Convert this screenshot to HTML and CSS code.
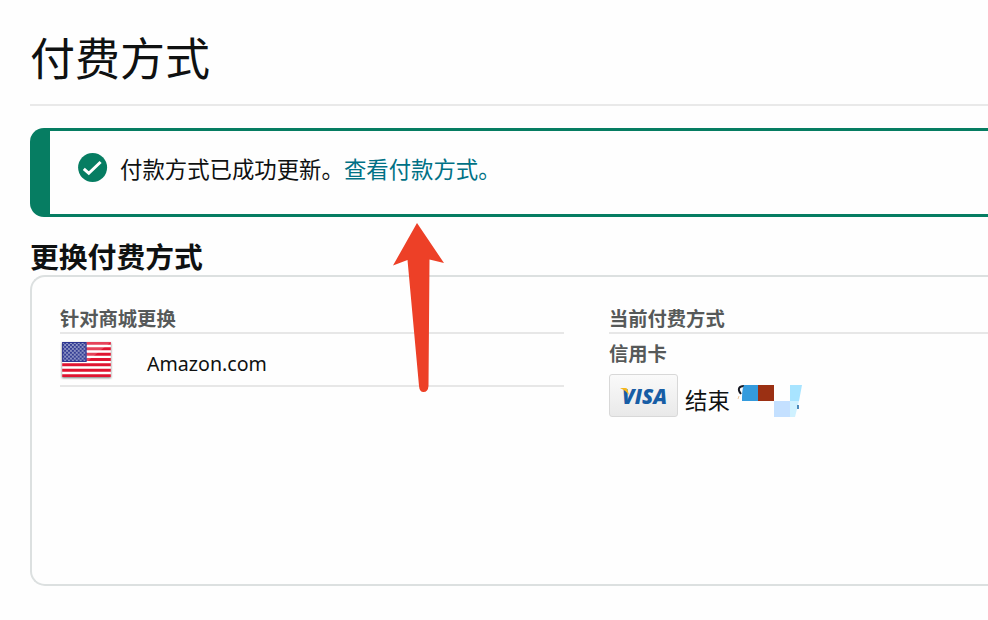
FILE: index.html
```html
<!DOCTYPE html>
<html lang="zh-CN">
<head>
<meta charset="utf-8">
<title>付费方式</title>
<link rel="stylesheet" href="styles.css">
</head>
<body>
<main class="page">
  <h1 class="title">付费方式</h1>
  <div class="alert">
    <svg class="check" viewBox="0 0 30 30"><circle cx="14.600" cy="14.600" r="14.5" fill="#067d62"/><path d="M5.800 15.800l5 4.500L22.600 9" fill="none" stroke="#fff" stroke-width="3"/></svg>
    <p class="message">付款方式已成功更新。<a class="link">查看付款方式。</a></p>
  </div>
  <h2 class="heading">更换付费方式</h2>
  <section class="card">
    <div class="column">
      <h3 class="label">针对商城更换</h3>
      <div class="store">
        <svg class="flag" viewBox="0 0 50 36">
          <defs>
            <pattern id="stars" width="4" height="4" patternUnits="userSpaceOnUse"><rect width="4" height="4" fill="#343e94"/><circle cx="1" cy="1" r=".85" fill="#e5e8f5"/><circle cx="3" cy="3" r=".85" fill="#e5e8f5"/></pattern>
          </defs>
          <rect width="50" height="36" fill="#fff"/>
          <path d="M0 1.4h50M0 6.95h50M0 12.5h50M0 18h50M0 23.5h50M0 29h50M0 34.6h50" stroke="#e01431" stroke-width="3.1"/>
          <path d="M0 0h50L25 20.500H0z" fill="#fff" fill-opacity=".2"/>
          <rect width="25" height="20.5" fill="url(#stars)"/>
          <rect x=".5" y=".5" width="24" height="19.500" fill="none" stroke="#2b3490"/>
        </svg>
        <span class="store-name">Amazon.com</span>
      </div>
    </div>
    <div class="column column-method">
      <h3 class="label">当前付费方式</h3>
      <h3 class="type">信用卡</h3>
      <div class="method">
        <span class="visa"><svg width="60" height="34" viewBox="0 0 60 34"><text class="visa-text" x="8" y="25" textLength="45" lengthAdjust="spacingAndGlyphs">VISA</text><path d="M6 9h5.500q1.800 0 2.200 2l1.200 5Q12 11.500 6 9z" fill="#f4b61d"/></svg></span>
        <span class="ending">结束</span>
        <svg class="mask" viewBox="0 0 68 36">
          <path d="M5 13C1 8 3 5 8 5" fill="none" stroke="#171923" stroke-width="2"/>
          <path d="M3 15l-1 3" stroke="#efc79b"/>
          <path d="M8 4h14v16H6c0-6 0-12 2-16z" fill="#349bdd"/>
          <path d="M22 4h16v16H22z" fill="#9b3013"/>
          <path d="M38 20h16v16H38z" fill="#c4e0ff"/>
          <path d="M54 4h12l-3 16h-9z" fill="#a8e4ff"/>
          <path d="M54 20h9l-4 16h-5z" fill="#cff1ff"/>
          <path d="M62 24v4" stroke="#1664a5" stroke-width="1.5"/>
        </svg>
      </div>
    </div>
  </section>
  <svg class="arrow" viewBox="0 0 52 170"><path d="M24 0L51 40L36.5 36.5L35.5 163Q35 169 30.500 169Q26.500 169 26 163L14.500 37L0 42.500z" fill="#ed4027"/></svg>
</main>
</body>
</html>
```
FILE: styles.css
```css
* { box-sizing: border-box; }
body {
  margin: 0;
  overflow: hidden;
  background: #fefefe;
  color: #0f1111;
  font-family: "Noto Sans", "Noto Sans CJK SC", sans-serif;
}
.page {
  position: relative;
  height: 620px;
  padding: 12px 0 0 30px;
}
h1, h2, h3, p { margin: 0; }
.title {
  height: 94px;
  border-bottom: 2px solid #e9e9e9;
  font-size: 45px;
  font-weight: 400;
  line-height: 93px;
}
.alert {
  display: flex;
  height: 89px;
  margin-top: 22px;
  padding: 22px 0 0 28px;
  border: 3px solid #067d62;
  border-left-width: 20px;
  border-right: 0;
  border-radius: 14px 0 0 14px;
}
.check { flex: none; width: 30px; height: 30px; }
.message {
  margin-left: 12px;
  font-size: 22.4px;
  line-height: 34px;
  white-space: nowrap;
}
.link { color: #007185; }
.heading {
  height: 58px;
  padding-top: 19px;
  font-size: 28.8px;
  font-weight: 700;
  line-height: 42px;
}
.card {
  display: grid;
  grid-template-columns: 504px 1fr;
  column-gap: 45px;
  height: 311px;
  padding: 28px 0 0 28px;
  border: 2px solid #dce0e0;
  border-right: 0;
  border-radius: 15px 0 0 15px;
}
.label {
  height: 29px;
  border-bottom: 2px solid #e7e7e7;
}
.label, .type {
  color: #565959;
  font-size: 19.3px;
  font-weight: 700;
  line-height: 28px;
}
.type { height: 40px; line-height: 40px; }
.store {
  display: flex;
  height: 53px;
  padding: 8px 0 0 2px;
  border-bottom: 2px solid #e7e7e7;
}
.flag {
  width: 49px;
  height: 35px;
  filter: drop-shadow(0 1px 1px #777);
}
.store-name {
  margin-left: 36px;
  font-size: 19.6px;
  line-height: 44px;
}
.method { display: flex; }
.visa {
  display: grid;
  place-items: center;
  width: 69px;
  height: 43px;
  border: 1.5px solid #d8d8d8;
  border-radius: 3px;
  background: linear-gradient(#fafafa, #e9e9e9);
}
.visa-text {
  fill: #175da5;
  font: italic 800 21.5px "Open Sans", sans-serif;
}
.ending {
  margin-left: 7px;
  font-size: 22.4px;
  line-height: 53px;
}
.mask {
  width: 68px;
  height: 36px;
  margin: 7px 0 0 6px;
}
.arrow {
  position: absolute;
  top: 223px;
  left: 393px;
  width: 52px;
  height: 170px;
}
```
